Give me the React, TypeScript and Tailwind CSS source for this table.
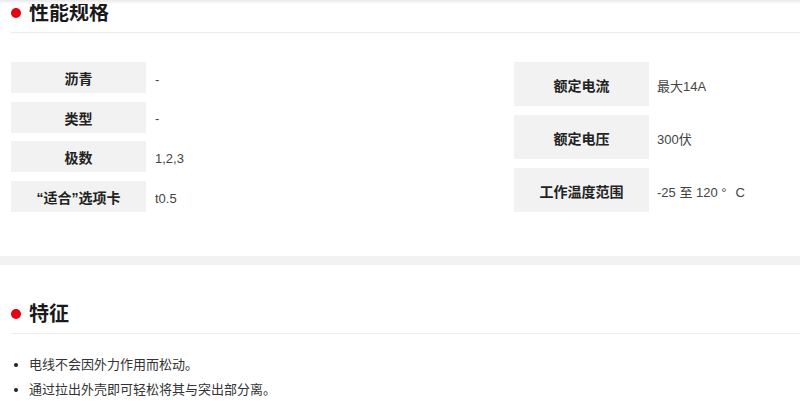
const LEFT_SPECS = [
  { label: '沥青', value: '-' },
  { label: '类型', value: '-' },
  { label: '极数', value: '1,2,3' },
  { label: '“适合”选项卡', value: 't0.5' },
];

const RIGHT_SPECS = [
  { label: '额定电流', value: '最大14A' },
  { label: '额定电压', value: '300伏' },
  {
    label: '工作温度范围',
    value: (
      <>
        -25 至 120 <span className="mr-[9px]">°</span>C
      </>
    ),
  },
];

const FEATURES = ['电线不会因外力作用而松动。', '通过拉出外壳即可轻松将其与突出部分离。'];

function SectionTitle({ title }: { title: string }) {
  return (
    <div className="ml-[11px] pb-[7px] border-b border-[#ececec]">
      <div className="h-[25px] flex items-center gap-[8px]">
        <span className="w-[10px] h-[10px] rounded-full bg-[#e60012]" />
        <h2 className="text-[20px] font-bold text-[#1a1a1a] leading-none">{title}</h2>
      </div>
    </div>
  );
}

export default function App() {
  return (
    <div
      className="relative w-[800px] h-[420px] bg-white overflow-hidden text-[#333]"
      style={{ fontFamily: '"Liberation Sans", "Noto Sans CJK SC", sans-serif' }}
    >
      {/* faint top shadow */}
      <div className="absolute inset-x-0 top-0 h-[4px] bg-gradient-to-b from-[#e9e9e9] to-white pointer-events-none" />

      <SectionTitle title="性能规格" />

      {/* Spec tables */}
      <div className="flex pl-[11px] mt-[29px]">
        <div className="w-[503px] flex flex-col gap-[8.7px]">
          {LEFT_SPECS.map((s) => (
            <div key={s.label} className="flex items-center h-[31px]">
              <div className="w-[135px] h-full pt-[4px] bg-[#f2f2f2] flex items-center justify-center text-[14px] font-bold text-[#222]">
                {s.label}
              </div>
              <div className="pl-[9px] pt-[4px] text-[13px] text-[#444]">{s.value}</div>
            </div>
          ))}
        </div>
        <div className="flex-1 flex flex-col gap-[9px]">
          {RIGHT_SPECS.map((s) => (
            <div key={s.label} className="flex items-center h-[44px]">
              <div className="w-[135px] h-full pt-[5px] bg-[#f2f2f2] flex items-center justify-center text-[14px] font-bold text-[#222]">
                {s.label}
              </div>
              <div className="pl-[8px] pt-[5px] text-[13px] text-[#444]">{s.value}</div>
            </div>
          ))}
        </div>
      </div>

      {/* band */}
      <div className="mt-[44px] h-[9px] bg-[#f2f2f2]" />

      <div className="mt-[36px]">
        <SectionTitle title="特征" />
      </div>

      <ul className="ml-[14px] mt-[18px]">
        {FEATURES.map((f) => (
          <li key={f} className="flex items-center gap-[11px] leading-[25px] text-[13px] text-[#333]">
            <span className="w-[4px] h-[4px] rounded-full bg-[#222]" />
            {f}
          </li>
        ))}
      </ul>
    </div>
  );
}
